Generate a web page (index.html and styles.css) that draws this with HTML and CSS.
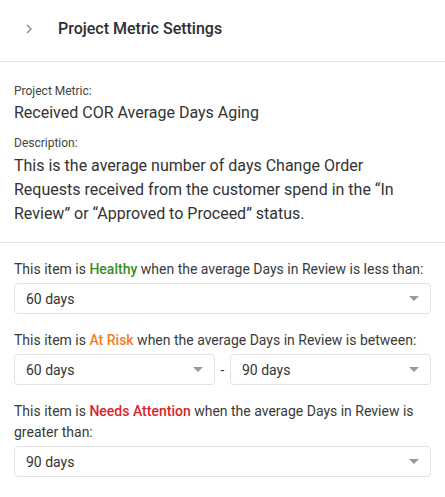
FILE: index.html
```html
<!DOCTYPE html>
<html lang="en">
  <head>
    <meta charset="UTF-8" />
    <meta name="viewport" content="width=device-width, initial-scale=1.0" />
    <title>Project Metric Settings</title>
    <link rel="stylesheet" href="styles.css">
  </head>
  <body>
    <div class="panel">
      <div class="panel-header">
        <svg class="chevron" width="8" height="12" viewBox="0 0 8 12">
          <path d="M2 2l4 4-4 4" fill="none" stroke="#8a8a8a" stroke-width="1.4" />
        </svg>
        <div class="panel-title">Project Metric Settings</div>
      </div>

      <div class="metric-info">
        <div class="field-label">Project Metric:</div>
        <div class="metric-name">Received COR Average Days Aging</div>
        <div class="field-label desc-label">Description:</div>
        <div class="metric-desc">
          This is the average number of days Change Order Requests received from the customer spend in the “In Review” or “Approved to Proceed” status.
        </div>
      </div>

      <div class="thresholds">
        <div class="threshold">
          <div class="threshold-text">
            This item is <span class="healthy">Healthy</span> when the average Days in Review is less than:
          </div>
          <div class="select">
            <span>60 days</span>
            <span class="caret"></span>
          </div>
        </div>

        <div class="threshold">
          <div class="threshold-text">
            This item is <span class="risk">At Risk</span> when the average Days in Review is between:
          </div>
          <div class="select-range">
            <div class="select">
              <span>60 days</span>
              <span class="caret"></span>
            </div>
            <div class="range-dash">-</div>
            <div class="select">
              <span>90 days</span>
              <span class="caret"></span>
            </div>
          </div>
        </div>

        <div class="threshold">
          <div class="threshold-text">
            This item is <span class="attention">Needs Attention</span> when the average Days in Review is greater than:
          </div>
          <div class="select">
            <span>90 days</span>
            <span class="caret"></span>
          </div>
        </div>
      </div>
    </div>
  </body>
</html>
```

FILE: styles.css
```css
* {
  margin: 0;
  padding: 0;
  box-sizing: border-box;
  font-family: Roboto, "Liberation Sans", Arial, sans-serif;
}

body {
  background-color: #fff;
  color: #333;
  overflow: hidden;
}

.panel-header {
  height: 62px;
  display: flex;
  align-items: center;
  padding: 0 0 4px 25px;
  border-bottom: 1px solid #e4e4e4;
}

.chevron {
  margin-right: 25px;
}

.panel-title {
  font-size: 16px;
  font-weight: 500;
  color: #2e2e35;
}

.metric-info {
  padding: 21px 14px 16px;
  border-bottom: 1px solid #e4e4e4;
}

.field-label {
  font-size: 12px;
  line-height: 16px;
  color: #444;
}

.metric-name {
  margin-top: 2px;
  font-size: 16px;
  line-height: 24px;
  color: #333;
}

.desc-label {
  margin-top: 10px;
}

.metric-desc {
  margin-top: 3px;
  font-size: 16px;
  line-height: 24px;
  color: #333;
  padding-right: 20px;
}

.thresholds {
  padding: 16px 14px 0;
  display: flex;
  flex-direction: column;
  gap: 16px;
}

.threshold-text {
  font-size: 14px;
  line-height: 21px;
  color: #3a3a3a;
  margin-bottom: 3px;
}

.healthy {
  color: #3d8c1c;
  font-weight: 500;
}

.risk {
  color: #f57c1f;
  font-weight: 500;
}

.attention {
  color: #d8262b;
  font-weight: 500;
}

.select {
  height: 31px;
  border: 1px solid #e2e2e2;
  border-radius: 4px;
  display: flex;
  align-items: center;
  justify-content: space-between;
  padding: 0 11px 0 11px;
  font-size: 14px;
  color: #333;
  flex: 1;
}

.caret {
  width: 0;
  height: 0;
  border-left: 5px solid transparent;
  border-right: 5px solid transparent;
  border-top: 5px solid #9a9a9a;
}

.select-range {
  display: flex;
  align-items: center;
}

.range-dash {
  width: 15px;
  text-align: center;
  font-size: 14px;
  color: #333;
}
```
